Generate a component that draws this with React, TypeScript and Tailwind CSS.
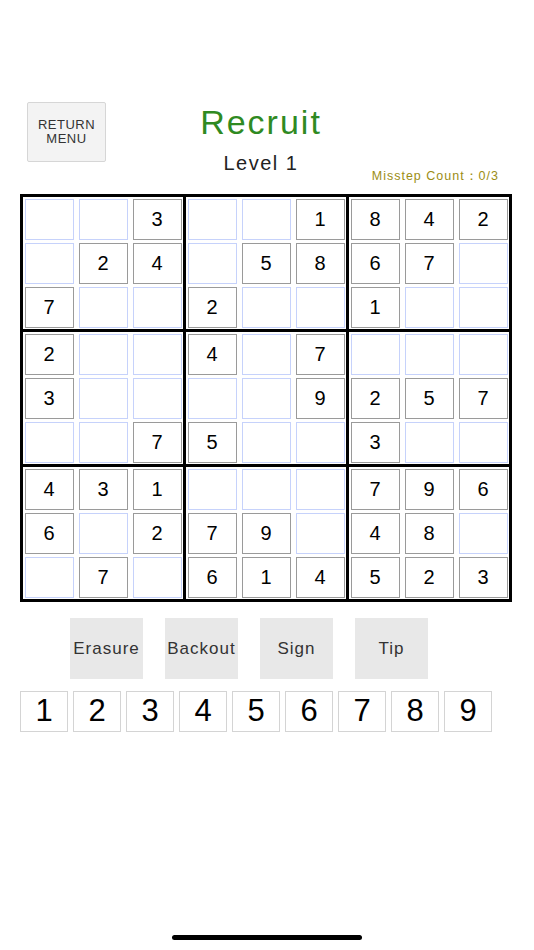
import React from "react";

type Cell = number | null;

// 0 = empty
const puzzle: number[][] = [
  [0, 0, 3, 0, 0, 1, 8, 4, 2],
  [0, 2, 4, 0, 5, 8, 6, 7, 0],
  [7, 0, 0, 2, 0, 0, 1, 0, 0],
  [2, 0, 0, 4, 0, 7, 0, 0, 0],
  [3, 0, 0, 0, 0, 9, 2, 5, 7],
  [0, 0, 7, 5, 0, 0, 3, 0, 0],
  [4, 3, 1, 0, 0, 0, 7, 9, 6],
  [6, 0, 2, 7, 9, 0, 4, 8, 0],
  [0, 7, 0, 6, 1, 4, 5, 2, 3],
];

const tools = ["Erasure", "Backout", "Sign", "Tip"];

const getBlock = (b: number): Cell[] => {
  const br = Math.floor(b / 3) * 3;
  const bc = (b % 3) * 3;
  const cells: Cell[] = [];
  for (let r = br; r < br + 3; r++) {
    for (let c = bc; c < bc + 3; c++) {
      const v = puzzle[r][c];
      cells.push(v === 0 ? null : v);
    }
  }
  return cells;
};

const SudokuCell = ({ value }: { value: Cell }) => {
  if (value === null) {
    return <div className="h-[41px] w-[49px] border border-[#c6d2fb] bg-white" />;
  }
  return (
    <div className="flex h-[41px] w-[49px] items-center justify-center border border-[#9a9a9a] bg-white text-[20px] text-black">
      {value}
    </div>
  );
};

export default function App() {
  return (
    <div className="flex h-[950px] w-[534px] flex-col bg-white font-['Liberation_Sans',Arial,sans-serif]">
      {/* header */}
      <div className="mt-[102px] grid grid-cols-[1fr_auto_1fr]">
        <div className="flex items-start pl-[27px]">
          <button className="flex h-[60px] w-[79px] flex-col items-center justify-center rounded-[2px] border border-[#d6d6d6] bg-[#f3f3f3] text-[13px] leading-[14px] tracking-[0.5px] text-[#333]">
            <span>RETURN</span>
            <span>MENU</span>
          </button>
        </div>
        <div className="mr-[12px] flex flex-col items-center pb-[9px]">
          <div className="text-[34px] leading-[40px] tracking-[2px] text-[#2f8a22]">Recruit</div>
          <div className="mt-[9px] text-[20px] leading-[24px] tracking-[1.5px] text-[#222]">Level 1</div>
        </div>
        <div className="flex items-end justify-end pr-[35px]">
          <span className="text-[12.5px] leading-[16px] tracking-[1px] text-[#9c8d14]">Misstep Count：0/3</span>
        </div>
      </div>

      {/* board */}
      <div className="ml-[20px] mt-[10px] grid w-[492px] grid-cols-3 gap-[3px] border-[3px] border-black bg-black">
        {Array.from({ length: 9 }).map((_, b) => (
          <div key={b} className="grid grid-cols-3 gap-x-[5px] gap-y-[3px] bg-white p-[1.5px]">
            {getBlock(b).map((v, i) => (
              <SudokuCell key={i} value={v} />
            ))}
          </div>
        ))}
      </div>

      {/* tools */}
      <div className="mt-[16px] flex gap-[22px] pl-[70px]">
        {tools.map((t) => (
          <button
            key={t}
            className="flex h-[61px] w-[73px] items-center justify-center bg-[#e8e8e8] text-[17px] tracking-[1px] text-[#333]"
          >
            {t}
          </button>
        ))}
      </div>

      {/* number pad */}
      <div className="mt-[12px] flex gap-[5px] pl-[20px]">
        {[1, 2, 3, 4, 5, 6, 7, 8, 9].map((n) => (
          <button
            key={n}
            className="flex h-[41px] w-[48px] items-center justify-center border border-[#d4d4d4] bg-white text-[31px] text-black"
          >
            {n}
          </button>
        ))}
      </div>

      {/* home indicator */}
      <div className="mx-auto mt-[203px] h-[5px] w-[190px] rounded-full bg-black" />
    </div>
  );
}
